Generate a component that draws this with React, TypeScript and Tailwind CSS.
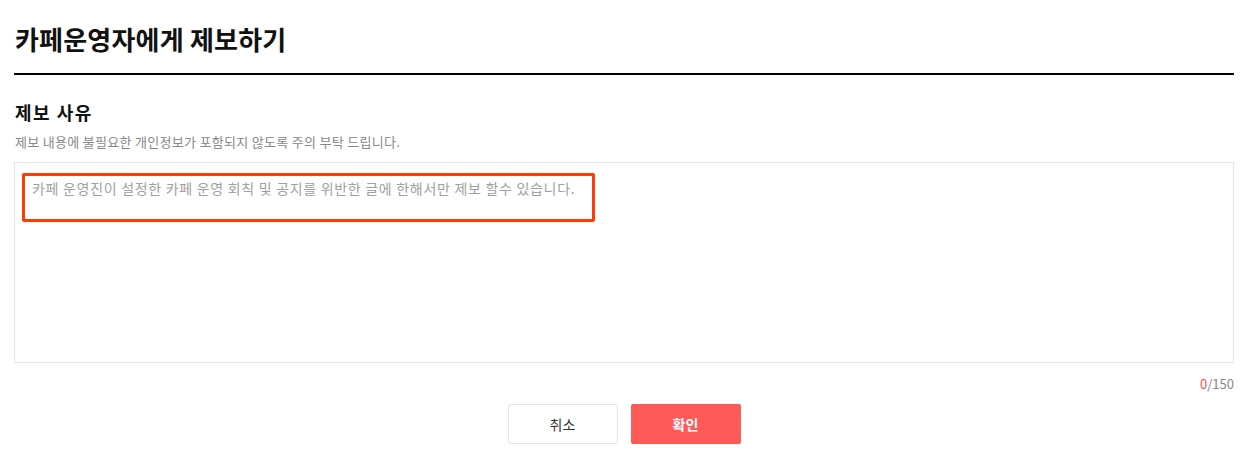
import React from "react";

const font = { fontFamily: '"Noto Sans CJK KR", "Noto Sans", sans-serif' };

export default function App() {
  return (
    <div className="w-[1244px] h-[471px] bg-white pl-[14px] pr-[10px] text-[#000]" style={font}>
      <div className="h-[75px] border-b-2 border-black pt-[19px]">
        <h1 className="pl-[1px] text-[26px] font-bold leading-[40px] text-[#111] tracking-[0.2px]">카페운영자에게 제보하기</h1>
      </div>
      <h2 className="mt-[24px] pl-[1px] text-[18px] font-bold leading-[26px] tracking-[1.5px] text-[#111]">제보 사유</h2>
      <p className="mt-[8px] pl-[1px] text-[13px] leading-[18px] tracking-[0.3px] text-[#888]">제보 내용에 불필요한 개인정보가 포함되지 않도록 주의 부탁 드립니다.</p>
      <div className="relative mt-[11px] h-[201px] border border-[#e5e5e5]">
        <textarea
          className="h-full w-full resize-none bg-transparent pl-[17px] pt-[15px] text-[14px] leading-[20px] tracking-[0.7px] text-[#333] outline-none placeholder:text-[#a0a0a0]"
          style={font}
          placeholder="카페 운영진이 설정한 카페 운영 회칙 및 공지를 위반한 글에 한해서만 제보 할수 있습니다."
        />
        <div className="pointer-events-none absolute left-[7px] top-[10px] h-[49px] w-[573px] rounded-[2px] border-[3px] border-[#ff3d00]" />
      </div>
      <div className="mt-[12px] text-right text-[13px] leading-[18px] text-[#888]">
        <span className="text-[#ff4b4b]">0</span>/150
      </div>
      <div className="mt-[11px] flex justify-center gap-[13px]">
        <button className="h-[40px] w-[110px] rounded-[2px] border border-[#e6e6e6] bg-white text-[14px] text-[#333]" style={font}>취소</button>
        <button className="h-[40px] w-[110px] rounded-[2px] bg-[#ff5a5a] text-[14px] font-bold text-white" style={font}>확인</button>
      </div>
    </div>
  );
}
